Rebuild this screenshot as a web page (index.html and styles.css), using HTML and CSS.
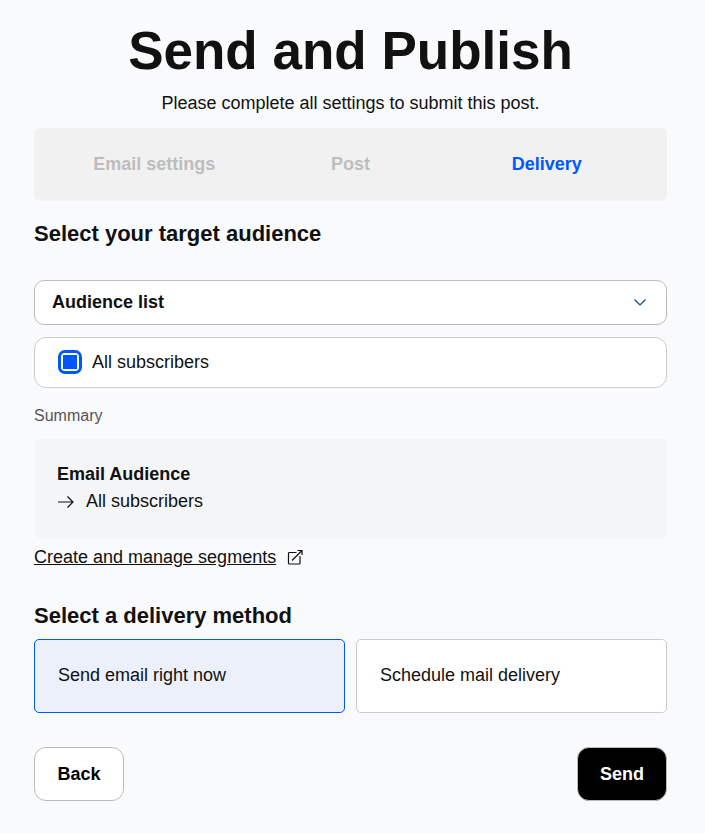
FILE: index.html
```html
<!DOCTYPE html>
<html lang="en">
<head>
<meta charset="utf-8">
<meta name="viewport" content="width=device-width, initial-scale=1">
<title>Send and Publish</title>
<link rel="stylesheet" href="styles.css">
</head>
<body>
<main class="page">
  <header class="intro">
    <h1 class="title">Send and Publish</h1>
    <p class="subtitle">Please complete all settings to submit this post.</p>
  </header>

  <nav class="steps">
    <button class="step" type="button">Email settings</button>
    <button class="step" type="button">Post</button>
    <button class="step step-active" type="button" aria-current="step">Delivery</button>
  </nav>

  <form class="form">
    <section class="audience">
      <h2 class="heading" id="audience-heading">Select your target audience</h2>
      <div class="dropdown">
        <select class="dropdown-select" aria-labelledby="audience-heading">
          <option>Audience list</option>
        </select>
        <svg class="chevron" viewBox="0 0 12 7" aria-hidden="true"><path d="M.5.5 6 6 11.5.5"/></svg>
      </div>
      <label class="check-row" for="all-subscribers">
        <input class="check" id="all-subscribers" type="checkbox" checked>
        <span>All subscribers</span>
      </label>
      <p class="summary-label">Summary</p>
      <div class="summary">
        <h3 class="summary-title">Email Audience</h3>
        <p class="summary-item">
          <svg class="arrow" viewBox="0 0 17 14" aria-hidden="true"><path d="M1 8h15M10.500 2.500 16 8l-5.500 5.500"/></svg>
          <span>All subscribers</span>
        </p>
      </div>
      <a class="segments" href="#">
        <span class="segments-text">Create and manage segments</span>
        <svg class="external" viewBox="0 0 16 16" aria-hidden="true"><path d="M9.500 3.500H2.500A1 1 0 0 0 1.500 4.500V14A1 1 0 0 0 2.500 15H12A1 1 0 0 0 13 14V7M5 11.500 15 1.500M10.500 1.500H15V6"/></svg>
      </a>
    </section>

    <fieldset class="delivery">
      <legend class="heading">Select a delivery method</legend>
      <div class="options">
        <label class="option"><input class="option-input" type="radio" name="delivery" checked>Send email right now</label>
        <label class="option"><input class="option-input" type="radio" name="delivery">Schedule mail delivery</label>
      </div>
    </fieldset>

    <div class="actions">
      <button class="button" type="button">Back</button>
      <button class="button button-primary" type="submit">Send</button>
    </div>
  </form>
</main>
</body>
</html>
```
FILE: styles.css
```css
* {
  box-sizing: border-box;
}

body {
  margin: 0;
  background: #f9fafc;
  color: #111;
  font: 18px/26px "Liberation Sans", Arial, sans-serif;
}

h1, h2, h3, p {
  margin: 0;
}

button, select, input {
  font: inherit;
  color: inherit;
}

svg {
  flex: none;
  fill: none;
  stroke: currentColor;
  stroke-width: 1.2;
}

.page {
  padding: 20px 38px 32px 34px;
}

.intro {
  text-align: center;
}

.title {
  font-size: 53px;
  line-height: 62px;
  font-weight: 700;
}

.subtitle {
  margin-top: 8px;
}

.steps {
  display: grid;
  grid-template-columns: repeat(3, 1fr);
  margin-top: 12px;
  padding: 0 22px;
  border-radius: 6px;
  background: #f1f1f1;
}

.step {
  padding: 23px 0 24px;
  border: 0;
  background: none;
  color: #bdbdbd;
  font-weight: 700;
}

.step-active {
  color: #0057ff;
}

.heading {
  padding: 0;
  font-size: 22px;
  line-height: 28px;
  font-weight: 700;
}

.audience {
  display: flex;
  flex-direction: column;
  padding-top: 19px;
}

.dropdown {
  display: grid;
  align-items: center;
  margin-top: 32px;
}

.dropdown-select {
  grid-area: 1 / 1;
  appearance: none;
  width: 100%;
  height: 45px;
  padding: 0 17px 2px;
  border: 1px solid #bbb;
  border-radius: 10px;
  background: #fff;
  font-weight: 700;
}

.chevron {
  grid-area: 1 / 1;
  justify-self: end;
  width: 12px;
  height: 7px;
  margin-right: 21px;
  color: #0b4a8f;
  pointer-events: none;
}

.check-row {
  display: flex;
  align-items: center;
  gap: 10px;
  margin-top: 12px;
  padding: 11px 23px 12px;
  border: 1px solid #ccc;
  border-radius: 12px;
  background: #fff;
}

.check {
  appearance: none;
  width: 24px;
  height: 24px;
  margin: 0;
  border: 3px solid #0057ff;
  border-radius: 7px;
  background: #fff;
}

.check:checked {
  background: linear-gradient(#0057ff, #0057ff) center / 14px 14px no-repeat #fff;
}

.summary-label {
  margin-top: 16px;
  color: #555;
  font-size: 16px;
  line-height: 24px;
}

.summary {
  margin-top: 11px;
  padding: 22px 23px 24px;
  border-radius: 6px;
  background: #f4f5f7;
}

.summary-title {
  font-size: 18px;
  line-height: 27px;
}

.summary-item {
  display: flex;
  align-items: center;
  gap: 12px;
}

.arrow {
  width: 17px;
  height: 14px;
}

.segments {
  display: flex;
  align-items: center;
  align-self: flex-start;
  gap: 11px;
  margin-top: 6px;
  color: inherit;
  text-decoration: none;
}

.segments-text {
  text-decoration: underline;
}

.external {
  width: 16px;
  height: 16px;
}

.delivery {
  min-width: 0;
  margin: 32px 0 0;
  padding: 0;
  border: 0;
}

.options {
  display: grid;
  grid-template-columns: 1fr 1fr;
  gap: 11px;
  margin-top: 9px;
}

.option {
  padding: 22px 23px 24px;
  border: 1px solid #ccc;
  border-radius: 5px;
  background: #fff;
}

.option:has(:checked) {
  border-color: #0057ff;
  background: #ecf0fb;
}

.option-input {
  position: absolute;
  appearance: none;
  margin: 0;
}

.actions {
  display: flex;
  justify-content: space-between;
  margin-top: 34px;
}

.button {
  min-width: 90px;
  padding: 13px 20px;
  border: 1px solid #bbb;
  border-radius: 12px;
  background: #fff;
  color: #000;
  font-weight: 700;
}

.button-primary {
  background: #000;
  color: #fff;
}
```
